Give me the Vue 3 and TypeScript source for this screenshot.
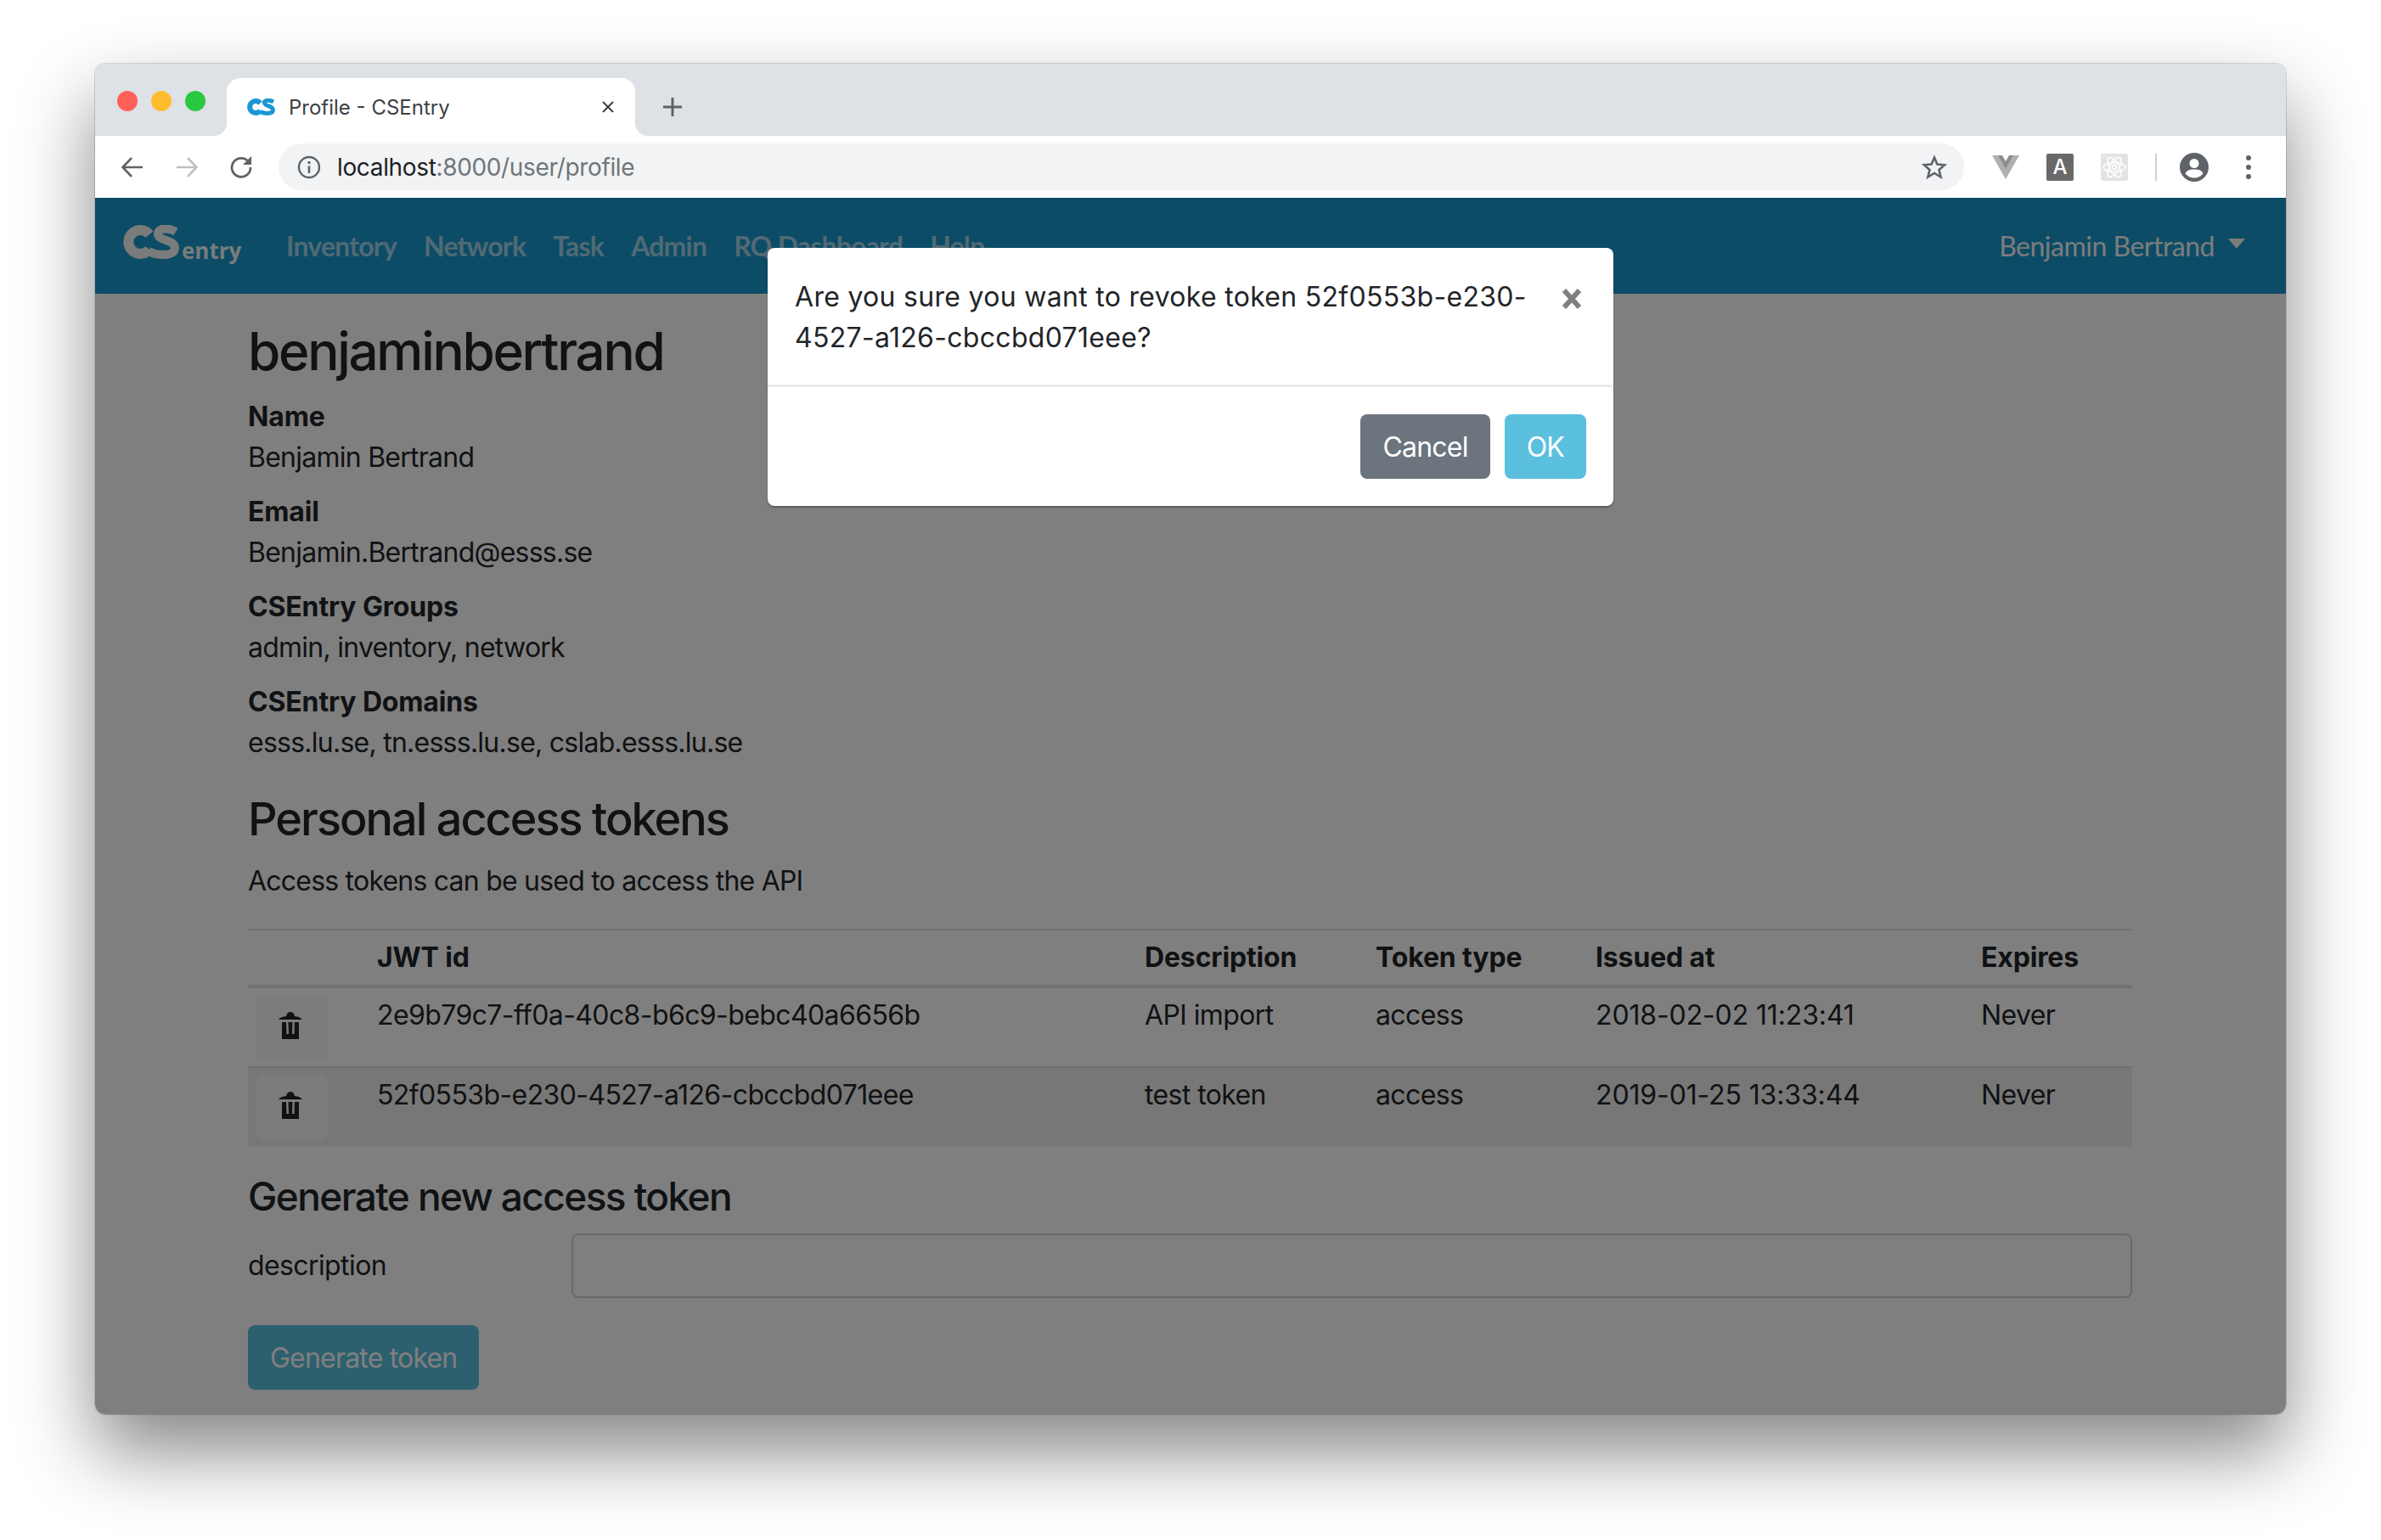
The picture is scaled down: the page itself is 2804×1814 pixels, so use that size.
<template>
  <div class="desktop">
    <div class="window">
      <div class="tabstrip">
        <div class="lights">
          <span class="light red" />
          <span class="light yellow" />
          <span class="light green" />
        </div>
        <div class="tab">
          <svg class="favicon" viewBox="0 0 66 42" width="33" height="21">
            <path d="M31 11A14 14 0 1 0 31 29" fill="none" stroke="#1b97d4" stroke-width="12" />
            <path d="M62 8C52 2 40 4 41 11C42 19 61 17 61 27C61 37 42 37 30 31" fill="none" stroke="#1b97d4" stroke-width="10" />
          </svg>
          <span class="tab-title">Profile - CSEntry</span>
          <svg class="tab-close" viewBox="0 0 16 16" width="16" height="16">
            <path d="M2 2L14 14M14 2L2 14" stroke="#3c4043" stroke-width="2" />
          </svg>
        </div>
        <svg class="new-tab" viewBox="0 0 24 24" width="24" height="24">
          <path d="M12 1V23M1 12H23" stroke="#5f6368" stroke-width="3" />
        </svg>
      </div>

      <div class="toolbar">
        <span class="tool">
          <svg viewBox="0 0 28 28" width="28" height="28">
            <path d="M26 14H3M13 3L2.500 14L13 25" fill="none" stroke="#5f6368" stroke-width="2.600" />
          </svg>
        </span>
        <span class="tool">
          <svg viewBox="0 0 28 28" width="28" height="28">
            <path d="M2 14H25M15 3L25.500 14L15 25" fill="none" stroke="#bdc1c6" stroke-width="2.600" />
          </svg>
        </span>
        <span class="tool">
          <svg viewBox="0 0 28 28" width="28" height="28">
            <path d="M23 8A11 11 0 1 0 25 14" fill="none" stroke="#5f6368" stroke-width="2.800" />
            <path d="M26 1V11H16Z" fill="#5f6368" />
          </svg>
        </span>
        <div class="omnibox">
          <svg class="info" viewBox="0 0 28 28" width="28" height="28">
            <circle cx="14" cy="14" r="12" fill="none" stroke="#5f6368" stroke-width="2.400" />
            <path d="M14 12.500V21" stroke="#5f6368" stroke-width="2.600" />
            <circle cx="14" cy="8.500" r="1.700" fill="#5f6368" />
          </svg>
          <span class="url">localhost<span class="url-rest">:8000/user/profile</span></span>
          <svg class="star" viewBox="0 0 30 30" width="30" height="30">
            <path d="M15 3.500L18.400 11.600L27.200 12.300L20.500 18L22.600 26.600L15 22L7.400 26.600L9.500 18L2.800 12.300L11.600 11.600Z" fill="none" stroke="#5f6368" stroke-width="2.600" />
          </svg>
        </div>
        <span class="tool">
          <svg viewBox="0 0 32 28" width="32" height="28">
            <path d="M0 0H32L16 28Z" fill="#b0b0b0" />
            <path d="M7 0H25L16 15.500Z" fill="#8e8e8e" />
            <path d="M12 0H20L16 7Z" fill="#fff" />
          </svg>
        </span>
        <span class="tool">
          <span class="ext-a">A</span>
        </span>
        <span class="tool">
          <span class="ext-react">
            <svg viewBox="0 0 32 32" width="32" height="32">
              <g fill="none" stroke="#fff" stroke-width="1.500">
                <ellipse cx="16" cy="16" rx="13" ry="5.500" />
                <ellipse cx="16" cy="16" rx="13" ry="5.500" transform="rotate(60 16 16)" />
                <ellipse cx="16" cy="16" rx="13" ry="5.500" transform="rotate(120 16 16)" />
                <circle cx="16" cy="16" r="2.500" />
              </g>
            </svg>
          </span>
        </span>
        <span class="tool-divider" />
        <span class="tool">
          <svg viewBox="0 0 34 34" width="34" height="34">
            <circle cx="17" cy="17" r="17" fill="#5f6368" />
            <circle cx="17" cy="12.500" r="5.500" fill="#fff" />
            <path d="M6.500 24C9 20 13 19.500 17 19.500C21 19.500 25 20 27.500 24C25 28 21 29.500 17 29.500C13 29.500 9 28 6.500 24Z" fill="#fff" />
          </svg>
        </span>
        <span class="tool">
          <svg viewBox="0 0 6 30" width="6" height="30">
            <circle cx="3" cy="4" r="3" fill="#5f6368" />
            <circle cx="3" cy="15" r="3" fill="#5f6368" />
            <circle cx="3" cy="26" r="3" fill="#5f6368" />
          </svg>
        </span>
      </div>

      <div class="page">
        <nav class="navbar">
          <svg class="logo" viewBox="0 0 148 50" width="148" height="50">
            <path d="M31 11A14 14 0 1 0 31 29" fill="none" stroke="#f4f6f6" stroke-width="12" />
            <path d="M62 8C52 2 40 4 41 11C42 19 61 17 61 27C61 37 42 37 30 31" fill="none" stroke="#f4f6f6" stroke-width="10" />
            <text class="logo-text" x="69" y="40">entry</text>
          </svg>
          <a v-for="link in links" :key="link" class="nav-link">{{ link }}</a>
          <a class="nav-user">Benjamin Bertrand<span class="caret" /></a>
        </nav>

        <main class="content">
          <h2>benjaminbertrand</h2>
          <dl v-for="item in details" :key="item.label">
            <dt>{{ item.label }}</dt>
            <dd>{{ item.value }}</dd>
          </dl>

          <h3>Personal access tokens</h3>
          <p>Access tokens can be used to access the API</p>

          <table>
            <colgroup>
              <col v-for="w in colWidths" :key="w" :style="{ width: w + 'px' }" />
            </colgroup>
            <thead>
              <tr>
                <th />
                <th>JWT id</th>
                <th>Description</th>
                <th>Token type</th>
                <th>Issued at</th>
                <th>Expires</th>
              </tr>
            </thead>
            <tbody>
              <tr v-for="token in tokens" :key="token.id">
                <td class="cell-action">
                  <button class="btn-trash">
                    <svg viewBox="0 0 28 32" width="28" height="32">
                      <path d="M9 5C9.500 1.500 11.500 0 14 0C16.500 0 18.500 1.500 19 5C23 5.500 26.500 6.500 28 9H0C1.500 6.500 5 5.500 9 5Z" fill="#212529" />
                      <path d="M4 12H9L9.500 26H12L11.500 12H16.500L16 26H18.500L19 12H24V32H4Z" fill="#212529" />
                    </svg>
                  </button>
                </td>
                <td>{{ token.id }}</td>
                <td>{{ token.description }}</td>
                <td>{{ token.type }}</td>
                <td class="cell-date">{{ token.issued }}</td>
                <td>{{ token.expires }}</td>
              </tr>
            </tbody>
          </table>

          <h4>Generate new access token</h4>
          <div class="form-row">
            <label for="description">description</label>
            <input id="description" type="text" />
          </div>
          <button class="btn-generate">Generate token</button>
        </main>

        <div class="backdrop" />

        <div class="modal">
          <div class="modal-header">
            <span class="modal-title">Are you sure you want to revoke token 52f0553b-e230-4527-a126-cbccbd071eee?</span>
            <svg class="modal-close" viewBox="0 0 26 26" width="26" height="26">
              <path d="M4 3L22 23M22 3L4 23" stroke="#808080" stroke-width="6" />
            </svg>
          </div>
          <div class="modal-footer">
            <button class="btn-cancel">Cancel</button>
            <button class="btn-ok">OK</button>
          </div>
        </div>
      </div>
    </div>
  </div>
</template>

<script setup lang="ts">
const links = ['Inventory', 'Network', 'Task', 'Admin', 'RQ Dashboard', 'Help']

const details = [
  { label: 'Name', value: 'Benjamin Bertrand' },
  { label: 'Email', value: 'Benjamin.Bertrand@esss.se' },
  { label: 'CSEntry Groups', value: 'admin, inventory, network' },
  { label: 'CSEntry Domains', value: 'esss.lu.se, tn.esss.lu.se, cslab.esss.lu.se' },
]

const colWidths = [144, 904, 272, 259, 454, 186]

const tokens = [
  {
    id: '2e9b79c7-ff0a-40c8-b6c9-bebc40a6656b',
    description: 'API import',
    type: 'access',
    issued: '2018-02-02 11:23:41',
    expires: 'Never',
  },
  {
    id: '52f0553b-e230-4527-a126-cbccbd071eee',
    description: 'test token',
    type: 'access',
    issued: '2019-01-25 13:33:44',
    expires: 'Never',
  },
]
</script>

<style>
html,
body {
  margin: 0;
  background: #fff;
}
</style>

<style scoped>
.desktop {
  width: 2804px;
  height: 1814px;
  padding: 75px 112px 0;
  box-sizing: border-box;
  overflow: hidden;
  font-family: Inter, "Liberation Sans", sans-serif;
  color: #212529;
}
.window {
  width: 2580px;
  height: 1591px;
  border-radius: 12px;
  overflow: hidden;
  display: flex;
  flex-direction: column;
  box-shadow: 0 0 0 1px rgba(0, 0, 0, 0.14), 0 44px 90px rgba(0, 0, 0, 0.48);
}

/* tab strip */
.tabstrip {
  height: 85px;
  flex-shrink: 0;
  display: flex;
  align-items: flex-end;
  background: #dee1e6;
  padding-left: 26px;
}
.lights {
  display: flex;
  gap: 16px;
  align-self: flex-start;
  margin-top: 32px;
  margin-right: 25px;
}
.light {
  width: 24px;
  height: 24px;
  border-radius: 50%;
}
.red { background: #ff5f57; }
.yellow { background: #ffbd2e; }
.green { background: #28c940; }
.tab {
  position: relative;
  width: 481px;
  height: 68px;
  box-sizing: border-box;
  padding: 0 24px;
  display: flex;
  align-items: center;
  background: #fff;
  border-radius: 16px 16px 0 0;
}
.tab::before,
.tab::after {
  content: "";
  position: absolute;
  bottom: 0;
  width: 16px;
  height: 16px;
}
.tab::before {
  left: -16px;
  background: radial-gradient(circle at 0 0, transparent 16px, #fff 16.500px);
}
.tab::after {
  right: -16px;
  background: radial-gradient(circle at 100% 0, transparent 16px, #fff 16.500px);
}
.favicon { flex-shrink: 0; }
.tab-title {
  margin-left: 16px;
  font-size: 24px;
  color: #3c4043;
  flex: 1;
}
.new-tab {
  margin-left: 32px;
  margin-bottom: 22px;
}

/* toolbar */
.toolbar {
  height: 73px;
  flex-shrink: 0;
  box-sizing: border-box;
  padding: 0 12px;
  display: flex;
  align-items: center;
  background: #fff;
}
.tool {
  width: 64px;
  flex-shrink: 0;
  display: flex;
  align-items: center;
  justify-content: center;
}
.omnibox {
  flex: 1;
  height: 55px;
  margin: 0 17px 0 12px;
  padding: 0 20px 0 22px;
  border-radius: 28px;
  display: flex;
  align-items: center;
  background: #f1f3f4;
}
.url {
  flex: 1;
  margin-left: 19px;
  font-size: 28px;
  letter-spacing: -0.35px;
  color: #202124;
}
.url-rest { color: #70757a; }
.ext-a {
  width: 32px;
  height: 32px;
  border-radius: 2px;
  background: #696969;
  color: #fff;
  font-size: 24px;
  font-weight: 500;
  text-align: center;
  line-height: 32px;
}
.ext-react {
  width: 32px;
  height: 32px;
  border-radius: 3px;
  background: #e3e3e3;
  display: block;
}
.ext-react svg { display: block; }
.tool-divider {
  width: 2px;
  height: 32px;
  margin: 0 12px 0 16px;
  background: #d0d2d5;
}

/* page */
.page {
  position: relative;
  flex: 1;
  background: #fff;
  overflow: hidden;
}
.navbar {
  height: 113px;
  box-sizing: border-box;
  padding: 0 48px 0 33px;
  display: flex;
  align-items: center;
  gap: 32px;
  background: #1898cc;
  font-family: Lato, "Open Sans", sans-serif;
  font-size: 32px;
}
.logo {
  flex-shrink: 0;
  margin-right: 12px;
}
.logo-text {
  font-family: "Open Sans", sans-serif;
  font-weight: 700;
  font-size: 26px;
  fill: #f4f6f6;
}
.nav-link {
  color: rgba(255, 255, 255, 0.6);
  font-weight: 700;
  letter-spacing: -0.8px;
}
.nav-user {
  margin-left: auto;
  display: flex;
  align-items: center;
  color: #f8f9fa;
  letter-spacing: -0.5px;
}
.caret {
  width: 0;
  height: 0;
  margin-left: 16px;
  margin-bottom: 6px;
  border-top: 12px solid #f8f9fa;
  border-left: 10px solid transparent;
  border-right: 10px solid transparent;
}
.content {
  padding: 31px 181px 0 180px;
  font-size: 32px;
  line-height: 48px;
  letter-spacing: -0.6px;
}
h2,
h3,
h4 {
  margin: 0 0 16px;
  font-weight: 500;
  line-height: 1.2;
}
h2 { font-size: 62px; letter-spacing: -2.3px; }
h3 { font-size: 54px; letter-spacing: -2px; margin-top: 34px; }
h4 { font-size: 46px; letter-spacing: -1.6px; }
dl { margin: 0 0 16px; }
dt { font-weight: 700; letter-spacing: -0.15px; }
dd { margin: 0; letter-spacing: -0.75px; }
p { margin: 0 0 32px; letter-spacing: -0.78px; }
table {
  width: 2219px;
  table-layout: fixed;
  border-collapse: collapse;
  margin-bottom: 32px;
}
th,
td {
  padding: 8px;
  text-align: left;
  vertical-align: top;
  border-top: 2px solid #dee2e6;
}
th { font-weight: 700; letter-spacing: -0.15px; border-bottom: 4px solid #dee2e6; }
.cell-action { padding-left: 10px; }
.cell-date { letter-spacing: -0.13px; }
tbody tr:nth-child(even) { background: rgba(0, 0, 0, 0.065); }
.btn-trash {
  width: 84px;
  height: 76px;
  padding: 0 4px 4px 0;
  display: flex;
  align-items: center;
  justify-content: center;
  border: none;
  border-radius: 8px;
  background: #f7fbfa;
}
.form-row {
  display: grid;
  grid-template-columns: 381px 1fr;
  align-items: center;
  margin-bottom: 32px;
}
input {
  height: 76px;
  box-sizing: border-box;
  border: 2px solid #ced4da;
  border-radius: 8px;
  background: #fff;
  width: 100%;
}
.btn-generate,
.btn-cancel,
.btn-ok {
  height: 76px;
  padding: 0 26px;
  border: none;
  border-radius: 8px;
  font-family: inherit;
  font-size: 32px;
  letter-spacing: -0.8px;
  color: #fff;
  background: #5bc0de;
}
.btn-cancel { background: #6c757d; }

/* modal */
.backdrop {
  position: absolute;
  inset: 0;
  background: rgba(0, 0, 0, 0.5);
}
.modal {
  position: absolute;
  left: 792px;
  top: 59px;
  width: 996px;
  background: #fff;
  border-radius: 8px;
  box-shadow: 0 2px 2px rgba(0, 0, 0, 0.3);
  font-size: 32px;
  line-height: 48px;
}
.modal-header {
  height: 164px;
  box-sizing: border-box;
  padding: 34px 36px 0 32px;
  display: flex;
  align-items: flex-start;
  gap: 22px;
  border-bottom: 3px solid #e9ecef;
}
.modal-title {
  flex: 1;
  letter-spacing: 0.3px;
}
.modal-close {
  flex-shrink: 0;
  margin-top: 13px;
}
.modal-footer {
  padding: 32px;
  display: flex;
  justify-content: flex-end;
  gap: 17px;
}
</style>
